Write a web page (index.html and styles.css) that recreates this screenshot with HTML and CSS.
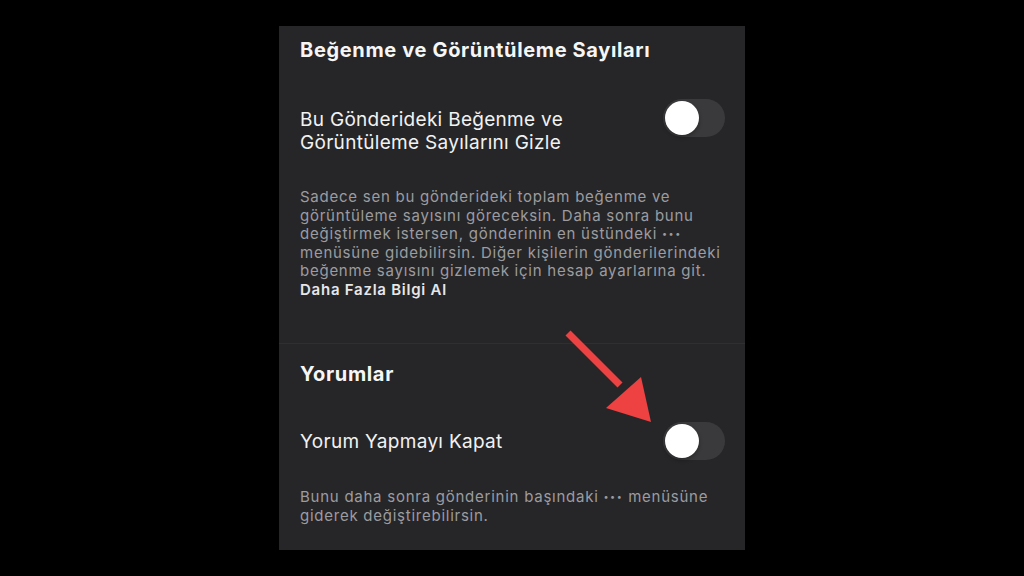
FILE: index.html
```html
<!DOCTYPE html>
<html lang="tr">
<head>
<meta charset="utf-8">
<title>Beğenme ve Görüntüleme Sayıları</title>
<link rel="stylesheet" href="styles.css">
</head>
<body>
<div class="panel">
  <section class="section first">
    <h2 class="heading">Beğenme ve Görüntüleme Sayıları</h2>
    <div class="row top">
      <div class="label">Bu Gönderideki Beğenme ve<br>Görüntüleme Sayılarını Gizle</div>
      <div class="toggle"><span class="knob"></span></div>
    </div>
    <p class="desc">Sadece sen bu gönderideki toplam beğenme ve<br>görüntüleme sayısını göreceksin. Daha sonra bunu<br>değiştirmek istersen, gönderinin en üstündeki <span class="dots">•••</span><br>menüsüne gidebilirsin. Diğer kişilerin gönderilerindeki<br>beğenme sayısını gizlemek için hesap ayarlarına git.<br><a class="link">Daha Fazla Bilgi Al</a></p>
  </section>
  <section class="section second">
    <h2 class="heading">Yorumlar</h2>
    <div class="row middle">
      <div class="label">Yorum Yapmayı Kapat</div>
      <div class="toggle"><span class="knob"></span></div>
    </div>
    <p class="desc">Bunu daha sonra gönderinin başındaki <span class="dots">•••</span> menüsüne<br>giderek değiştirebilirsin.</p>
  </section>
  <svg class="arrow" width="120" height="120" viewBox="0 0 120 120">
    <line x1="8" y1="8" x2="60" y2="60" stroke="#ee4141" stroke-width="7" stroke-linecap="butt"/>
    <polygon points="46,83 81,52 91,97" fill="#ee4141"/>
  </svg>
</div>
</body>
</html>
```
FILE: styles.css
```css
html, body {
  margin: 0;
  padding: 0;
  background: #000;
  height: 100%;
}
body {
  font-family: Inter, "Open Sans", "Liberation Sans", sans-serif;
  color: #f4f4f5;
}
.panel {
  position: relative;
  width: 466px;
  height: 524px;
  margin: 26px 0 0 279px;
  background: #262628;
  box-sizing: border-box;
}
.section {
  padding: 0 20px 0 21px;
  box-sizing: border-box;
}
.section.first {
  padding-top: 12px;
  height: 318px;
  border-bottom: 1px solid #2f2f31;
}
.section.second {
  padding-top: 18px;
}
.heading {
  margin: 0;
  font-size: 20px;
  line-height: 24px;
  font-weight: 700;
  letter-spacing: 0.65px;
  color: #f6f6f6;
}
.row {
  display: flex;
  justify-content: space-between;
  margin-top: 37px;
}
.row.top {
  align-items: flex-start;
}
.row.top .label {
  margin-top: 9px;
}
.row.middle {
  align-items: center;
  margin-top: 36px;
}
.label {
  font-size: 19px;
  line-height: 23px;
  font-weight: 400;
  letter-spacing: 0.3px;
  color: #f2f2f2;
}
.toggle {
  position: relative;
  flex: none;
  width: 62px;
  height: 38px;
  border-radius: 19px;
  background: #3a3a3c;
}
.knob {
  position: absolute;
  left: 2px;
  top: 2px;
  width: 34px;
  height: 34px;
  border-radius: 50%;
  background: #fff;
  box-shadow: 0 2px 4px rgba(0,0,0,0.3);
}
.desc {
  margin: 34px 0 0;
  font-size: 15px;
  line-height: 18.6px;
  color: #9c9ca0;
  letter-spacing: 0.75px;
}
.second .desc {
  margin-top: 28px;
}
.dots {
  font-size: 9px;
  letter-spacing: 1.5px;
  vertical-align: 2px;
}
.link {
  color: #e6e6e8;
  font-weight: 600;
}
.arrow {
  position: absolute;
  left: 281px;
  top: 299px;
}
```
